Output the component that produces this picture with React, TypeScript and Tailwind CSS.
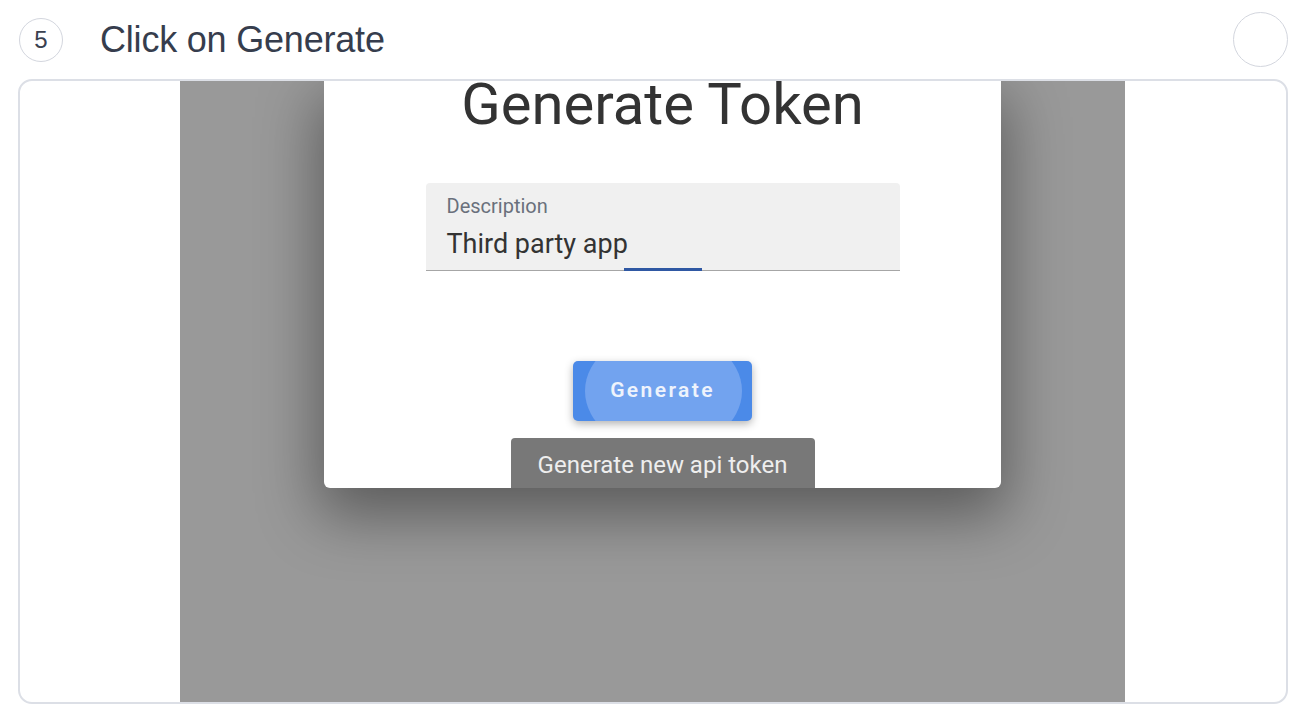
export default function App() {
  return (
    <div className="w-[1305px] h-[719px] bg-white pl-[18px] pr-[17px] font-['Liberation_Sans',Arial,sans-serif] overflow-hidden">
      {/* step header */}
      <div className="h-[79px] flex items-center justify-between">
        <div className="flex items-center">
          <div className="ml-[1px] w-[44px] h-[44px] rounded-full border-[1.5px] border-[#d3d6de] flex items-center justify-center text-[24px] text-[#3a4150]">
            5
          </div>
          <div className="ml-[37px] text-[36px] leading-none text-[#363d4d] tracking-[-0.2px]">Click on Generate</div>
        </div>
        <div className="w-[55px] h-[55px] rounded-full border-[1.5px] border-[#d3d6de]" />
      </div>

      {/* screenshot card */}
      <div className="h-[625px] rounded-[14px] border-2 border-[#dcdfe6] flex overflow-hidden">
        <div className="ml-[160px] w-[945px] h-full bg-[#999999] overflow-hidden font-['Roboto',sans-serif]">
          <div className="ml-[144px] w-[677px] bg-white rounded-b-[6px] shadow-[0_22px_60px_6px_rgba(0,0,0,0.4)] flex flex-col items-center">
            <div className="mt-[1px] text-[58px] leading-[44px] text-[#333333]">Generate Token</div>

            <div className="mt-[57px] w-[474px] h-[88px] bg-[#f0f0f0] rounded-t-[4px] relative flex flex-col pl-[21px] pt-[13px]">
              <div className="text-[20px] leading-[20px] text-[#6a707c]">Description</div>
              <div className="mt-[15px] text-[27px] leading-[27px] text-[#333333]">Third party app</div>
              <div className="absolute left-0 right-0 bottom-0 h-px bg-[#a6a6a6]" />
              <div className="absolute left-[198px] w-[78px] bottom-0 h-[3px] bg-[#2f58a3]" />
            </div>

            <div className="mt-[90px] w-[179px] h-[60px] rounded-[5px] bg-[#4b8ae8] shadow-[0_3px_8px_rgba(0,0,0,0.3)] relative overflow-hidden flex items-center justify-center">
              <div className="absolute left-[12px] right-[10px] -top-[30px] -bottom-[30px] rounded-[50%] bg-[#72a3ef]" />
              <span className="relative text-[21px] font-semibold tracking-[2.4px] text-[#eef3fc]">Generate</span>
            </div>

            <div className="mt-[17px] w-[304px] h-[50px] bg-[#787878] rounded-t-[4px] flex items-center justify-center pt-[3px] text-[24px] text-[#eeeeee]">
              Generate new api token
            </div>
          </div>
        </div>
      </div>
    </div>
  );
}
